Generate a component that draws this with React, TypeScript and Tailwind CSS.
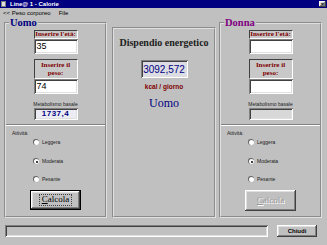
import React from 'react'

// ── Win9x bevels ──────────────────────────────────────────────────────────────
const raised = 'shadow-[inset_-1px_-1px_#404040,inset_1px_1px_#ffffff,inset_-2px_-2px_#808080,inset_2px_2px_#dfdfdf]'
const sunken = 'shadow-[inset_1px_1px_#808080,inset_-1px_-1px_#ffffff,inset_2px_2px_#404040,inset_-2px_-2px_#dfdfdf]'
const sans = "font-['Liberation_Sans',Arial,sans-serif]"
const serif = "font-['Liberation_Serif','Times_New_Roman',serif]"

function Radio({ label, checked }: { label: string; checked?: boolean }) {
  return (
    <div className="flex items-center h-[8px] gap-[3px]">
      <div className="w-[6px] h-[6px] rounded-full bg-white border-t border-l border-[#606060] flex items-center justify-center">
        {checked && <div className="w-[2px] h-[2px] rounded-full bg-black" />}
      </div>
      <span className={`${sans} text-[5px] leading-[5px] text-[#202020]`}>{label}</span>
    </div>
  )
}

function Person({ title, color, eta, peso, mb, active }: {
  title: string; color: string; eta: string; peso: string; mb: string; active: boolean
}) {
  return (
    <fieldset className="h-[200px] border-2 border-[#e0e0e0] [border-style:groove]">
      <legend className={`${serif} ml-[3px] px-[1px] text-[10.5px] leading-[10px] font-bold ${color}`}>{title}</legend>
      <div className="flex flex-col items-center">
        <div className={`mt-[2px] w-[44px] h-[9px] bg-[#c8c8c8] border-t border-l border-[#404040] border-b border-r border-b-white border-r-white flex items-center justify-center ${serif} text-[7px] leading-[7px] font-bold text-[#800000] whitespace-nowrap`}>
          Inserire l'età:
        </div>
        <div className={`w-[44px] h-[15px] bg-white ${sunken} flex items-center px-[3px] ${sans} text-[9px] text-black`}>{eta}</div>

        <div className={`mt-[5px] w-[44px] h-[20px] bg-[#c8c8c8] border-t border-l border-[#404040] border-b border-r border-b-white border-r-white flex items-center justify-center text-center ${serif} text-[7px] leading-[8px] font-bold text-[#800000]`}>
          Inserire il<br />peso:
        </div>
        <div className={`w-[44px] h-[15px] bg-white ${sunken} flex items-center px-[3px] ${sans} text-[9px] text-black`}>{peso}</div>

        <div className={`mt-[8px] h-[5px] ${sans} text-[5px] leading-[5px] text-[#202020] whitespace-nowrap`}>Metabolismo basale</div>
        <div className={`mt-[1px] w-[44px] h-[12px] ${active ? 'bg-[#ececf4]' : 'bg-[#d8d8d8]'} ${sunken} flex items-center justify-center ${sans} text-[8px] font-bold tracking-[0.5px] text-[#000080]`}>
          {mb}
        </div>

        <div className="mt-[4px] self-stretch h-[2px] border-t border-[#808080] border-b border-b-white" />

        <div className={`mt-[4px] self-start ml-[6px] h-[6px] ${sans} text-[5px] leading-[6px] text-[#202020]`}>Attività:</div>
        <div className="self-start ml-[27px] flex flex-col">
          <div className="mt-[2px]"><Radio label="Leggera" /></div>
          <div className="mt-[11px]"><Radio label="Moderata" checked /></div>
          <div className="mt-[10px]"><Radio label="Pesante" /></div>
        </div>

        {active ? (
          <div className={`mt-[7px] w-[51px] h-[20px] bg-[#c0c0c0] border border-black ${raised} flex items-center justify-center`}>
            <div className="border border-dotted border-[#404040] px-[2px] h-[12px] flex items-center">
              <span className={`${serif} text-[9px] text-black`}><u>C</u>alcola</span>
            </div>
          </div>
        ) : (
          <div className={`mt-[7px] w-[51px] h-[21px] bg-[#c0c0c0] ${raised} flex items-center justify-center`}>
            <span className={`${serif} text-[9px] text-[#9a9a9a] [text-shadow:1px_1px_#ffffff]`}><u>C</u>alcola</span>
          </div>
        )}
      </div>
    </fieldset>
  )
}

export default function App() {
  return (
    <div className={`w-[327px] h-[245px] bg-[#c0c0c0] flex flex-col overflow-hidden ${sans}`}>
      {/* Title bar */}
      <div className="h-[8px] bg-[#000080] flex items-center px-[1px]">
        <div className="w-[5px] h-[6px] bg-[#e0e0e0] border border-[#808080]" />
        <span className="ml-[4px] text-[6px] leading-[6px] font-bold text-white whitespace-nowrap">Line@ 1 - Calorie</span>
        <div className={`ml-auto w-[7px] h-[6px] bg-[#c0c0c0] ${raised} flex items-center justify-center text-[6px] leading-[6px] font-bold text-black`}>×</div>
      </div>

      {/* Menu */}
      <div className="h-[10px] flex items-center pl-[3px] gap-[8px] text-[6px] leading-[6px] text-black whitespace-nowrap">
        <span>&lt;&lt; Peso corporeo</span>
        <span>File</span>
      </div>

      {/* Main panels */}
      <div className="h-[202px] flex items-start pl-[4px]">
        <div className="w-[103px]">
          <Person title="Uomo" color="text-[#000080]" eta="35" peso="74" mb="1737,4" active />
        </div>

        <div className="ml-[5px] mt-[9px] w-[104px] h-[191px] border-2 border-[#e0e0e0] [border-style:groove] flex flex-col items-center">
          <div className={`mt-[8px] ${serif} text-[10px] leading-[11px] font-bold text-[#202020] whitespace-nowrap`}>Dispendio energetico</div>
          <div className={`mt-[12px] w-[47px] h-[18px] bg-[#dcdce4] ${sunken} flex items-center justify-center text-[10px] text-[#000080]`}>3092,572</div>
          <div className="mt-[6px] text-[6.5px] leading-[6px] font-bold text-[#800000] whitespace-nowrap">kcal / giorno</div>
          <div className={`mt-[7px] ${serif} text-[12px] leading-[12px] text-[#000080]`}>Uomo</div>
        </div>

        <div className="ml-[3px] w-[103px]">
          <Person title="Donna" color="text-[#800080]" eta="" peso="" mb="" active={false} />
        </div>
      </div>

      {/* Status + close */}
      <div className="flex items-start pt-[5px] pl-[5px]">
        <div className={`w-[263px] h-[12px] bg-[#c0c0c0] ${sunken}`} />
        <div className={`ml-[9px] w-[40px] h-[12px] bg-[#c0c0c0] ${raised} flex items-center justify-center text-[6px] font-bold text-black`}>
          Chiudi
        </div>
      </div>
    </div>
  )
}
